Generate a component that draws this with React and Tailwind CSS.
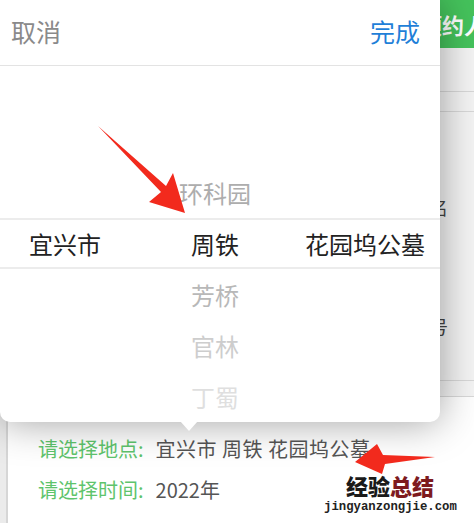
import React from "react";

const cjk = { fontFamily: '"Noto Sans CJK SC", "Noto Sans", sans-serif' };

export default function App() {
  return (
    <div className="relative w-[474px] h-[523px] overflow-hidden bg-[#f4f4f4]" style={cjk}>
      {/* Background page */}
      <div className="flex flex-col h-full">
        <div className="h-[48px] bg-[#45c35c] flex items-center pl-[420px] shrink-0">
          <span className="text-[22px] font-bold text-white whitespace-nowrap">预约人</span>
        </div>
        <div className="h-[44px] border-b border-[#d8d8d8] shrink-0"></div>
        <div className="h-[20px] border-b border-[#d8d8d8] shrink-0"></div>
        <div className="h-[269px] border-b border-[#d8d8d8] shrink-0 flex flex-col items-end pr-[26px] text-[18px] text-[#444]">
          <div className="mt-[82px]">姓名</div>
          <div className="mt-[92px]">手机号</div>
        </div>
        <div className="h-[16px] border-b border-[#d8d8d8] shrink-0"></div>
        <div className="flex-1 flex">
          <div className="w-[8px] bg-[#ebebeb] border-r-2 border-[#d6d6d6]"></div>
          <div className="flex-1 bg-white pl-[30px] pt-[40px] flex flex-col gap-[17px] text-[20px] leading-[24px]">
            <div className="flex whitespace-nowrap">
              <span className="text-[#5ec46c]">请选择地点:</span>
              <span className="text-[#555] ml-[12px] tracking-[0.5px]">宜兴市 周铁 花园坞公墓</span>
            </div>
            <div className="flex whitespace-nowrap">
              <span className="text-[#5ec46c]">请选择时间:</span>
              <span className="text-[#555] ml-[12px]">2022年</span>
            </div>
          </div>
        </div>
      </div>

      {/* Popup picker */}
      <div className="absolute left-0 top-0 w-[440px] h-[422px] bg-white rounded-b-[10px] shadow-[0_0_40px_rgba(0,0,0,0.38)] flex flex-col">
        <div className="h-[66px] shrink-0 flex items-center justify-between pl-[11px] pr-[20px] border-b border-[#e3e3e3] text-[25px] leading-[30px]">
          <span className="text-[#8a8a8a] -mt-[3px]">取消</span>
          <span className="text-[#1f7fd8] -mt-[3px]">完成</span>
        </div>
        <div className="relative flex-1">
          <div className="absolute left-0 right-0 top-[152px] h-[51px] border-y-2 border-[#ececec]"></div>
          <div className="flex ml-[-10px] pt-[101px] text-[24px] leading-[51px] text-center">
            <div className="w-[150px] flex flex-col">
              <div className="h-[51px]"></div>
              <div className="text-[#222]">宜兴市</div>
            </div>
            <div className="w-[150px] flex flex-col">
              <div className="text-[#adadad]">环科园</div>
              <div className="text-[#222]">周铁</div>
              <div className="text-[#b8b8b8]">芳桥</div>
              <div className="text-[#cdcdcd]">官林</div>
              <div className="text-[#dfdfdf]">丁蜀</div>
            </div>
            <div className="w-[150px] flex flex-col">
              <div className="h-[51px]"></div>
              <div className="text-[#222]">花园坞公墓</div>
            </div>
          </div>
        </div>
        {/* pointer */}
        <div className="absolute left-[180px] top-[421px] w-0 h-0 border-l-[9px] border-r-[9px] border-t-[10px] border-l-transparent border-r-transparent border-t-white"></div>
      </div>

      {/* Annotation arrows */}
      <svg className="absolute left-0 top-0 pointer-events-none" width="474" height="523">
        <polygon points="98,126 166,186 173,173 185,213 149,202 161,192" fill="#f22a1d" />
        <polygon points="435,457 383,455 377,444 355,462 382,474 385,464" fill="#f22a1d" />
      </svg>

      {/* Watermark */}
      <div className="absolute left-[346px] top-[472px] text-[22px] font-black leading-[26px] whitespace-nowrap">
        <span className="text-[#1a1a1a]">经验</span>
        <span className="text-[#7e1b1e]">总结</span>
      </div>
      <div
        className="absolute left-[324px] top-[500px] text-[12.3px] font-bold leading-[14px] text-[#222] whitespace-nowrap"
        style={{ fontFamily: '"Liberation Mono", "DejaVu Sans Mono", monospace' }}
      >
        jingyanzongjie.com
      </div>
    </div>
  );
}
